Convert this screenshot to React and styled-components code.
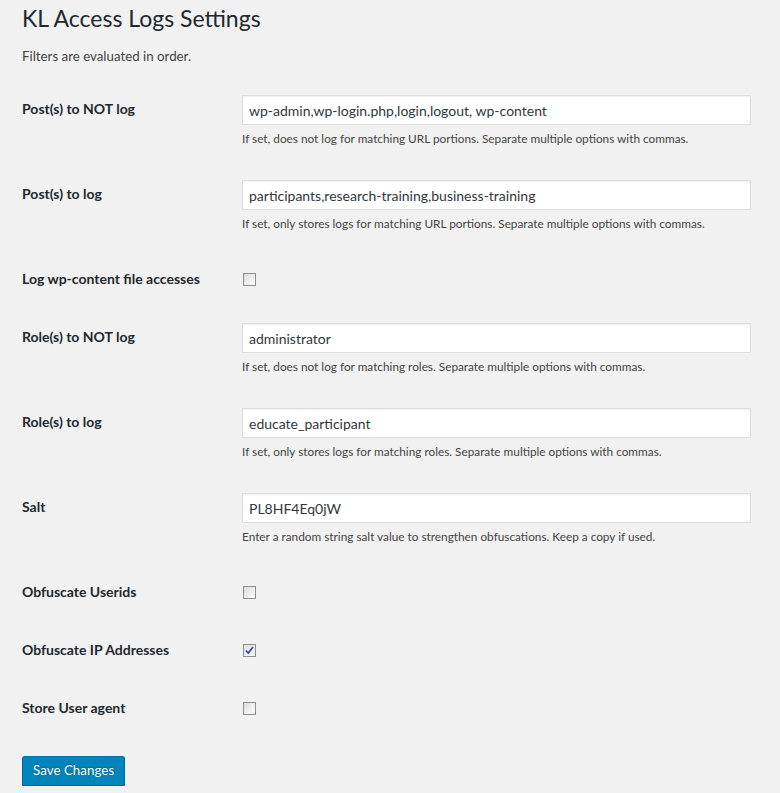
import React, { useState } from 'react';
import styled, { createGlobalStyle } from 'styled-components';

const GlobalStyle = createGlobalStyle`
  html, body {
    margin: 0;
    padding: 0;
    background: #f1f1f1;
  }
  body {
    font-family: Lato, "Noto Sans", sans-serif;
    color: #444;
  }
`;

const StyledWrap = styled.div`
  padding: 0 19px 0 22px;
`;
const StyledTitle = styled.h1`
  margin: 0;
  padding: 4px 0 0;
  font-size: 23px;
  font-weight: 400;
  line-height: 29px;
  color: #23282d;
`;
const StyledIntro = styled.p`
  margin: 14px 0 0;
  font-size: 13.3px;
  line-height: 18px;
  color: #444;
`;
const StyledTable = styled.div`
  margin-top: 15px;
  display: flex;
  flex-direction: column;
`;
const StyledRow = styled.div`
  display: grid;
  grid-template-columns: 220px 1fr;
`;
const StyledLabel = styled.label`
  padding: 20px 10px 20px 0;
  font-size: 14px;
  font-weight: 700;
  line-height: 18px;
  color: #23282d;
`;
const StyledField = styled.div`
  padding: 15px 10px 15px 0;
`;
const StyledInput = styled.input`
  display: block;
  box-sizing: border-box;
  width: 100%;
  height: 30px;
  margin: 0;
  padding: 0 6px;
  border: 1px solid #ddd;
  background: #fff;
  box-shadow: inset 0 1px 2px rgba(0, 0, 0, 0.07);
  font-family: inherit;
  font-size: 14px;
  color: #32373c;
  outline: none;
`;
const StyledDescription = styled.p`
  margin: 6px 0 4px;
  font-size: 11.8px;
  line-height: 15px;
  color: #444;
`;
const StyledCheckbox = styled.span`
  display: block;
  box-sizing: border-box;
  width: 13px;
  height: 13px;
  margin: 8px 0 0 1px;
  border: 1px solid #8f8f8f;
  background: linear-gradient(135deg, #dcdcdc 0%, #f4f4f4 70%, #fff 100%);
  cursor: pointer;
  position: relative;
  svg {
    position: absolute;
    left: 0;
    top: 0;
  }
`;
const StyledButton = styled.button`
  margin-top: 19px;
  height: 30px;
  padding: 0 10px 2px;
  border: 1px solid #0073aa;
  border-color: #0073aa #006799 #006799;
  border-radius: 3px;
  background: #0085ba;
  box-shadow: 0 1px 0 #006799;
  color: #fff;
  font-family: inherit;
  font-size: 13.4px;
  text-shadow: 0 -1px 1px #006799, 1px 0 1px #006799;
  cursor: pointer;
`;

const settings = [
  {
    label: 'Post(s) to NOT log',
    value: 'wp-admin,wp-login.php,login,logout, wp-content',
    note: 'If set, does not log for matching URL portions. Separate multiple options with commas.',
  },
  {
    label: 'Post(s) to log',
    value: 'participants,research-training,business-training',
    note: 'If set, only stores logs for matching URL portions. Separate multiple options with commas.',
  },
  { label: 'Log wp-content file accesses', checked: false },
  {
    label: 'Role(s) to NOT log',
    value: 'administrator',
    note: 'If set, does not log for matching roles. Separate multiple options with commas.',
  },
  {
    label: 'Role(s) to log',
    value: 'educate_participant',
    note: 'If set, only stores logs for matching roles. Separate multiple options with commas.',
  },
  {
    label: 'Salt',
    value: 'PL8HF4Eq0jW',
    note: 'Enter a random string salt value to strengthen obfuscations. Keep a copy if used.',
  },
  { label: 'Obfuscate Userids', checked: false },
  { label: 'Obfuscate IP Addresses', checked: true },
  { label: 'Store User agent', checked: false },
];

const Checkbox = ({ initial }) => {
  const [on, setOn] = useState(initial);
  return (
    <StyledCheckbox role="checkbox" aria-checked={on} onClick={() => setOn(!on)}>
      {on && (
        <svg width="11" height="11" viewBox="0 0 11 11">
          <path d="M2 5.5 L4.3 8 L9 2" fill="none" stroke="#3b4f9b" strokeWidth="1.8" />
        </svg>
      )}
    </StyledCheckbox>
  );
};

const App = () => (
  <StyledWrap>
    <GlobalStyle />
    <StyledTitle>KL Access Logs Settings</StyledTitle>
    <StyledIntro>Filters are evaluated in order.</StyledIntro>
    <StyledTable>
      {settings.map(({ label, value, note, checked }, i) => (
        <StyledRow key={i}>
          <StyledLabel>{label}</StyledLabel>
          <StyledField>
            {value !== undefined ? (
              <>
                <StyledInput type="text" defaultValue={value} />
                <StyledDescription>{note}</StyledDescription>
              </>
            ) : (
              <Checkbox initial={checked} />
            )}
          </StyledField>
        </StyledRow>
      ))}
    </StyledTable>
    <StyledButton>Save Changes</StyledButton>
  </StyledWrap>
);

export default App;
